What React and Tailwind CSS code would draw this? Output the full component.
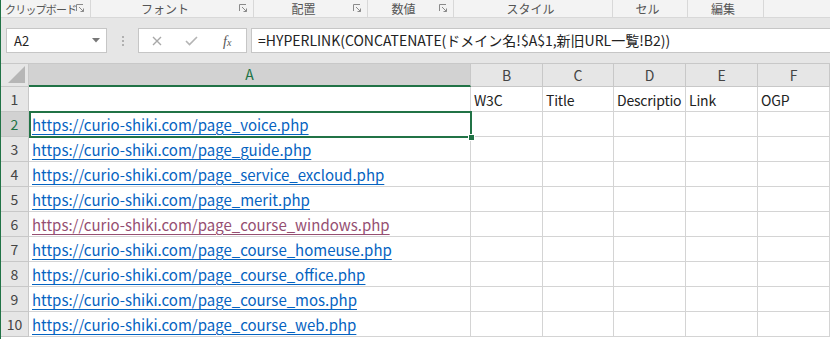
import React from "react";

const FONT = { fontFamily: '"Noto Sans CJK JP", "Noto Sans", sans-serif' };

function Launcher() {
  return (
    <svg width="9" height="9" viewBox="0 0 9 9" className="shrink-0">
      <path d="M0.5 7 V0.5 H7" fill="none" stroke="#8a8a8a" strokeWidth="1" />
      <path d="M3 3 L7.5 7.5" stroke="#8a8a8a" strokeWidth="1" />
      <path d="M4.5 7.5 H7.5 V4.5" fill="none" stroke="#8a8a8a" strokeWidth="1" />
    </svg>
  );
}

const groups = [
  { label: "クリップボード", w: "w-[90px]", launch: true, tight: true },
  { label: "フォント", w: "w-[163px]", launch: true },
  { label: "配置", w: "w-[114px]", launch: true },
  { label: "数値", w: "w-[86px]", launch: true },
  { label: "スタイル", w: "w-[159px]", launch: false },
  { label: "セル", w: "w-[75px]", launch: false },
  { label: "編集", w: "w-[76px]", launch: false },
];

const links = [
  "https://curio-shiki.com/page_voice.php",
  "https://curio-shiki.com/page_guide.php",
  "https://curio-shiki.com/page_service_excloud.php",
  "https://curio-shiki.com/page_merit.php",
  "https://curio-shiki.com/page_course_windows.php",
  "https://curio-shiki.com/page_course_homeuse.php",
  "https://curio-shiki.com/page_course_office.php",
  "https://curio-shiki.com/page_course_mos.php",
  "https://curio-shiki.com/page_course_web.php",
];

const colW = ["w-[442px]", "w-[72px]", "w-[71px]", "w-[72px]", "w-[72px]", "w-[72px]"];
const cols = ["A", "B", "C", "D", "E", "F"];
const row1 = ["", "W3C", "Title", "Descriptio", "Link", "OGP"];

export default function App() {
  return (
    <div
      className="relative w-[830px] h-[339px] overflow-hidden bg-white border-l border-[#217346] box-border"
      style={FONT}
    >
      {/* Ribbon group labels */}
      <div className="flex h-[18px] bg-[#f3f3f3] border-b border-[#d8d8d8] text-[12px] leading-[14px] text-[#555]">
        {groups.map((g) => (
          <div key={g.label} className={`${g.w} shrink-0 flex items-center border-r border-[#d8d8d8] pr-[5px]`}>
            <span
              className={`flex-1 text-center whitespace-nowrap ${
                g.tight ? "text-[11px] tracking-[-0.8px] pl-[4px] text-left" : ""
              }`}
            >
              {g.label}
            </span>
            {g.launch && <Launcher />}
          </div>
        ))}
      </div>

      {/* Formula bar */}
      <div className="h-[45px] bg-[#e6e6e6] pt-[10px] pl-[5px] flex items-start">
        <div className="w-[101px] h-[25px] bg-white border border-[#c6c6c6] flex items-center pl-[7px] pr-[6px] text-[13px] text-[#222]">
          <span className="flex-1">A2</span>
          <svg width="8" height="5" viewBox="0 0 8 5">
            <path d="M0 0 H8 L4 4.5 Z" fill="#777" />
          </svg>
        </div>
        <div className="w-[31px] h-[25px] flex flex-col items-center justify-center gap-[2px]">
          <span className="w-[2px] h-[2px] bg-[#b0b0b0]" />
          <span className="w-[2px] h-[2px] bg-[#b0b0b0]" />
          <span className="w-[2px] h-[2px] bg-[#b0b0b0]" />
        </div>
        <div className="w-[109px] h-[25px] bg-white border border-[#c6c6c6] flex items-center relative">
          <svg className="absolute left-[13px] top-[7px]" width="10" height="10" viewBox="0 0 10 10">
            <path d="M1 1 L9 9 M9 1 L1 9" stroke="#a8a8a8" strokeWidth="1.4" />
          </svg>
          <svg className="absolute left-[46px] top-[7px]" width="13" height="10" viewBox="0 0 13 10">
            <path d="M1 5 L4.5 8.5 L12 1" fill="none" stroke="#b4b4b4" strokeWidth="1.6" />
          </svg>
          <span
            className="absolute left-[84px] top-[2px] text-[14px] italic text-[#555]"
            style={{ fontFamily: '"Liberation Serif", serif' }}
          >
            f<span className="text-[10px]">x</span>
          </span>
        </div>
        <div className="ml-[4px] flex-1 h-[25px] bg-white border border-[#c6c6c6] border-r-0 flex items-center pl-[6px] text-[14px] text-[#222] whitespace-nowrap">
          =HYPERLINK(CONCATENATE(ドメイン名!$A$1,新旧URL一覧!B2))
        </div>
      </div>

      {/* Column headers */}
      <div className="flex h-[24px] bg-[#e6e6e6] border-t border-[#c8c8c8]">
        <div className="w-[28px] shrink-0 relative border-r border-[#c8c8c8] border-b border-b-[#c8c8c8]">
          <svg className="absolute right-[3px] bottom-[3px]" width="17" height="17" viewBox="0 0 17 17">
            <path d="M17 0 L17 17 L0 17 Z" fill="#b6b6b6" />
          </svg>
        </div>
        {cols.map((c, i) => (
          <div
            key={c}
            className={`${colW[i]} shrink-0 flex items-center justify-center text-[14px] ${
              i === 0
                ? "bg-[#d2d2d2] text-[#217346] border-b-2 border-[#217346] border-r border-r-[#c8c8c8]"
                : "text-[#444] border-r border-[#c8c8c8] border-b border-b-[#c8c8c8]"
            }`}
          >
            {c}
          </div>
        ))}
      </div>

      {/* Rows */}
      {Array.from({ length: 10 }).map((_, r) => (
        <div key={r} className="flex h-[25px]">
          <div
            className={`w-[28px] shrink-0 flex items-center justify-center text-[14px] border-r border-b border-[#c8c8c8] ${
              r === 1 ? "bg-[#d2d2d2] text-[#217346]" : "bg-[#e6e6e6] text-[#444]"
            }`}
          >
            {r + 1}
          </div>
          {cols.map((c, i) => (
            <div
              key={c}
              className={`${colW[i]} shrink-0 border-r border-b border-[#d4d4d4] flex items-end pl-[3px] pb-[1px] overflow-hidden whitespace-nowrap leading-[20px] ${
                r === 0 ? "text-[14px] tracking-[-0.2px]" : "text-[15px]"
              }`}
            >
              {r === 0 && <span className="text-[#222]">{row1[i]}</span>}
              {r > 0 && i === 0 && (
                <span
                  className={`underline underline-offset-[3px] ${
                    r === 5 ? "text-[#954f72]" : "text-[#0563c1]"
                  }`}
                >
                  {links[r - 1]}
                </span>
              )}
            </div>
          ))}
        </div>
      ))}

      {/* Selection */}
      <div className="absolute left-[28px] top-[111px] w-[443px] h-[27px] border-2 border-[#217346] pointer-events-none" />
      <div className="absolute left-[467px] top-[134px] w-[7px] h-[7px] bg-[#217346] border border-white" />
    </div>
  );
}
